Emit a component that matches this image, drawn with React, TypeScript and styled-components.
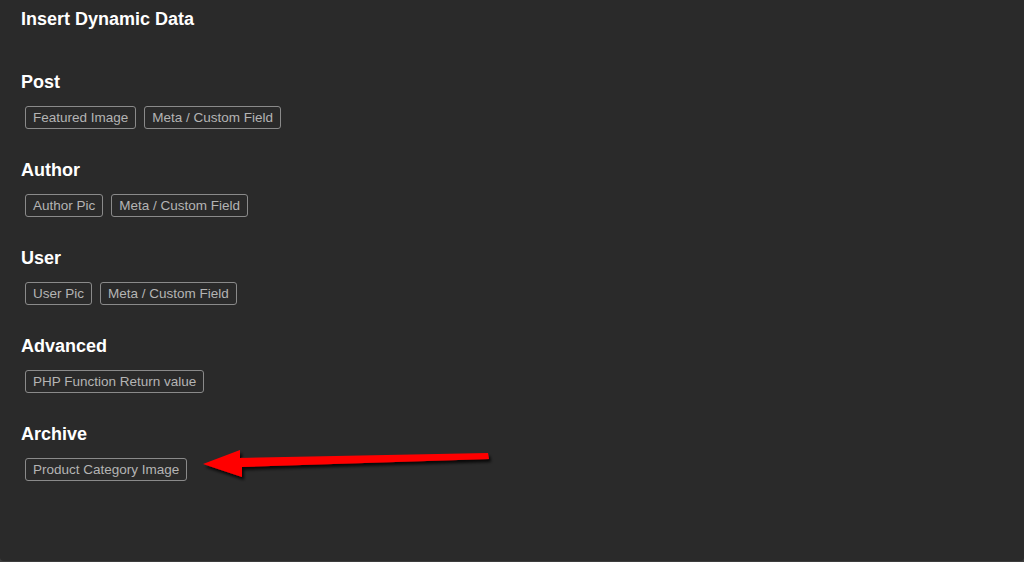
import styled, { createGlobalStyle } from 'styled-components';

const GlobalStyle = createGlobalStyle`
  html, body {
    margin: 0;
    padding: 0;
    background: #3d3d3d;
  }
  body {
    font-family: 'Liberation Sans', Arial, sans-serif;
  }
`;

const Panel = styled.div`
  position: relative;
  box-sizing: border-box;
  height: 561px;
  width: 1024px;
  padding: 9px 21px 0;
  background: #2a2a2a;
  border-radius: 0 0 4px 4px;
  overflow: hidden;
`;

const Title = styled.div`
  color: #ffffff;
  font-size: 18px;
  line-height: 20px;
  font-weight: 700;
  margin-bottom: 42px;
`;

const Section = styled.section`
  margin-bottom: 30px;
`;

const Heading = styled.div`
  color: #ffffff;
  font-size: 18px;
  line-height: 22px;
  font-weight: 700;
  margin-bottom: 13px;
`;

const ChipRow = styled.div`
  display: flex;
  gap: 8px;
  padding-left: 4px;
`;

const Chip = styled.button`
  box-sizing: border-box;
  height: 23px;
  padding: 0 7px;
  border: 1px solid #8a8a8a;
  border-radius: 3px;
  background: transparent;
  color: #b4b4b4;
  font-family: 'Liberation Sans', Arial, sans-serif;
  font-size: 13.5px;
  line-height: 21px;
  cursor: pointer;
`;

const Arrow = styled.svg`
  position: absolute;
  left: 195px;
  top: 440px;
  overflow: visible;
`;

const sections = [
  { name: 'Post', items: ['Featured Image', 'Meta / Custom Field'] },
  { name: 'Author', items: ['Author Pic', 'Meta / Custom Field'] },
  { name: 'User', items: ['User Pic', 'Meta / Custom Field'] },
  { name: 'Advanced', items: ['PHP Function Return value'] },
  { name: 'Archive', items: ['Product Category Image'] },
];

function RedArrow() {
  // coordinates relative to (195, 440)
  const shape = 'M8 24 L45 10 L45 18 L293 13 L294 19 L47 27 L47 37 Z';
  return (
    <Arrow width="300" height="45" viewBox="0 0 300 45">
      <defs>
        <filter id="arrowShadow" x="-10%" y="-50%" width="120%" height="200%">
          <feGaussianBlur in="SourceAlpha" stdDeviation="1.5" />
          <feOffset dx="2" dy="3" result="blur" />
          <feFlood floodColor="#000" floodOpacity="0.8" />
          <feComposite in2="blur" operator="in" />
          <feMerge>
            <feMergeNode />
            <feMergeNode in="SourceGraphic" />
          </feMerge>
        </filter>
      </defs>
      <path d={shape} fill="#ff0000" filter="url(#arrowShadow)" />
    </Arrow>
  );
}

export default function App() {
  return (
    <>
      <GlobalStyle />
      <Panel>
        <Title>Insert Dynamic Data</Title>
        {sections.map((s) => (
          <Section key={s.name}>
            <Heading>{s.name}</Heading>
            <ChipRow>
              {s.items.map((item) => (
                <Chip key={item}>{item}</Chip>
              ))}
            </ChipRow>
          </Section>
        ))}
        <RedArrow />
      </Panel>
    </>
  );
}
